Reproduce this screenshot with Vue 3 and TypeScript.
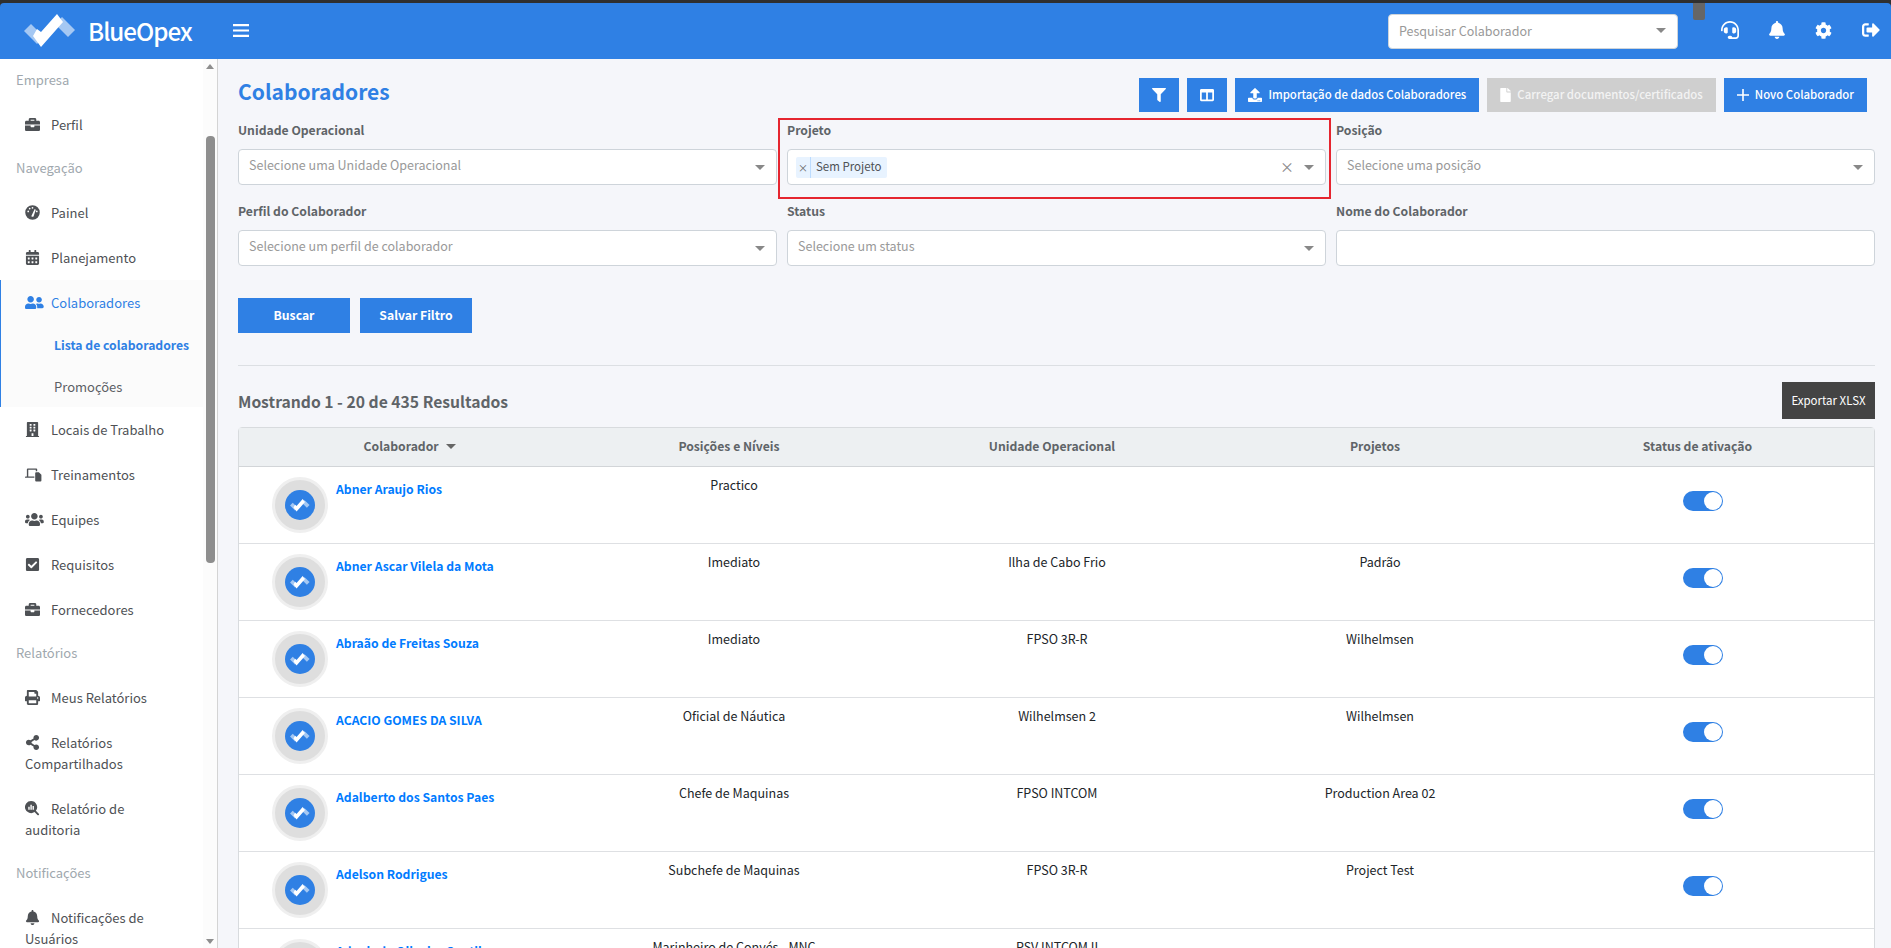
<template>
  <div class="page">
    <header class="topbar">
      <div class="brand">
        <svg class="logo" viewBox="0 0 52 34" width="52" height="34">
          <polygon points="0,17 7,10 20,23 13,30" fill="#a5c8f3" />
          <polygon points="38,3 51,16 44,23 31,10" fill="#a5c8f3" />
          <polygon points="9,22 17,33 39,8 33,0 17,18 13,15" fill="#fff" />
        </svg>
        <span class="brand-name">BlueOpex</span>
      </div>
      <svg class="burger" viewBox="0 0 16 13" width="16" height="13">
        <path d="M0 1.2h16M0 6.5h16M0 11.8h16" stroke="#fff" stroke-width="2.2" stroke-linecap="round" />
      </svg>
      <div class="top-right">
        <div class="top-search">
          <span>Pesquisar Colaborador</span>
          <i class="caret"></i>
        </div>
        <div class="top-icons">
          <svg viewBox="0 0 512 512" width="18" height="18" fill="#fff"><path :d="icons.headset" /></svg>
          <svg viewBox="0 0 448 512" width="16" height="18" fill="#fff"><path :d="icons.bell" /></svg>
          <svg viewBox="0 0 512 512" width="17" height="17" fill="#fff"><path :d="icons.cog" /></svg>
          <svg viewBox="0 0 512 512" width="18" height="18" fill="#fff"><path :d="icons.signout" /></svg>
        </div>
      </div>
      <div class="device-tab"></div>
    </header>

    <div class="body">
      <aside class="sidebar">
        <nav class="nav">
          <template v-for="entry in nav" :key="entry.label">
            <div v-if="entry.kind === 'group'" class="group">{{ entry.label }}</div>
            <div v-else-if="entry.kind === 'open'" class="open-block">
              <a class="item active">
                <svg :viewBox="entry.box" class="nav-icon wide-icon" fill="currentColor"><path :d="entry.icon" /></svg>{{ entry.label }}
              </a>
              <a class="sub current">Lista de colaboradores</a>
              <a class="sub">Promoções</a>
            </div>
            <a v-else class="item">
              <svg :viewBox="entry.box" class="nav-icon" :class="{ 'wide-icon': entry.box === '0 0 640 512' }" fill="currentColor"><path :d="entry.icon" fill-rule="evenodd" /></svg>{{ entry.label }}
            </a>
          </template>
        </nav>
        <div class="scroll-track">
          <i class="scroll-up"></i>
          <div class="scroll-thumb"></div>
          <i class="scroll-down"></i>
        </div>
      </aside>

      <main class="main">
        <div class="title-row">
          <h1>Colaboradores</h1>
          <div class="actions">
            <button class="btn icon-btn">
              <svg viewBox="0 0 512 512" width="14" height="14" fill="#fff"><path :d="icons.filter" /></svg>
            </button>
            <button class="btn icon-btn">
              <svg viewBox="0 0 512 512" width="14" height="14" fill="#fff"><path :d="icons.columns" /></svg>
            </button>
            <button class="btn">
              <svg viewBox="0 0 512 512" width="14" height="14" fill="#fff"><path :d="icons.upload" /></svg>
              Importação de dados Colaboradores
            </button>
            <button class="btn disabled">
              <svg viewBox="0 0 384 512" width="11" height="14" fill="#fff"><path :d="icons.file" /></svg>
              Carregar documentos/certificados
            </button>
            <button class="btn">
              <svg viewBox="0 0 12 12" width="12" height="12"><path d="M6 0v12M0 6h12" stroke="#fff" stroke-width="1.6" /></svg>
              Novo Colaborador
            </button>
          </div>
        </div>

        <div class="filters">
          <div class="field">
            <label>Unidade Operacional</label>
            <div class="select"><span>Selecione uma Unidade Operacional</span><i class="caret"></i></div>
          </div>
          <div class="field highlighted">
            <label>Projeto</label>
            <div class="select">
              <span class="chip"><b>×</b><em>Sem Projeto</em></span>
              <span class="clear">×</span>
              <i class="caret"></i>
            </div>
          </div>
          <div class="field">
            <label>Posição</label>
            <div class="select"><span>Selecione uma posição</span><i class="caret"></i></div>
          </div>
          <div class="field">
            <label>Perfil do Colaborador</label>
            <div class="select"><span>Selecione um perfil de colaborador</span><i class="caret"></i></div>
          </div>
          <div class="field">
            <label>Status</label>
            <div class="select"><span>Selecione um status</span><i class="caret"></i></div>
          </div>
          <div class="field">
            <label>Nome do Colaborador</label>
            <div class="select"></div>
          </div>
        </div>

        <div class="search-row">
          <button class="btn wide">Buscar</button>
          <button class="btn wide">Salvar Filtro</button>
        </div>

        <hr />

        <div class="result-row">
          <span class="result-count">Mostrando 1 - 20 de 435 Resultados</span>
          <button class="export">Exportar XLSX</button>
        </div>

        <div class="table">
          <div class="row head">
            <div>Colaborador <i class="caret dark"></i></div>
            <div>Posições e Níveis</div>
            <div>Unidade Operacional</div>
            <div>Projetos</div>
            <div>Status de ativação</div>
          </div>
          <div v-for="person in people" :key="person.name" class="row">
            <div class="person">
              <div class="avatar">
                <div class="avatar-in">
                  <svg viewBox="0 0 52 34" width="20" height="13">
                    <polygon points="0,17 7,10 20,23 13,30" fill="#a5c8f3" />
                    <polygon points="38,3 51,16 44,23 31,10" fill="#a5c8f3" />
                    <polygon points="9,22 17,33 39,8 33,0 17,18 13,15" fill="#fff" />
                  </svg>
                </div>
              </div>
              <a class="name">{{ person.name }}</a>
            </div>
            <div class="cell">{{ person.role }}</div>
            <div class="cell">{{ person.unit }}</div>
            <div class="cell">{{ person.project }}</div>
            <div class="cell toggle-cell"><span class="toggle"></span></div>
          </div>
        </div>
      </main>
    </div>
  </div>
</template>

<script setup lang="ts">
const icons = {
  headset: 'M192 208c0-17.67-14.33-32-32-32h-16c-35.35 0-64 28.65-64 64v48c0 35.35 28.65 64 64 64h16c17.67 0 32-14.33 32-32V208zm176 144c35.35 0 64-28.65 64-64v-48c0-35.35-28.65-64-64-64h-16c-17.67 0-32 14.33-32 32v112c0 17.67 14.33 32 32 32h16zM256 0C113.18 0 4.58 118.83 0 256v16c0 8.84 7.16 16 16 16h16c8.84 0 16-7.16 16-16v-16c0-114.69 93.31-208 208-208s208 93.31 208 208h-.12c.08 2.43.12 165.72.12 165.72 0 23.35-18.93 42.28-42.28 42.28H320c0-26.51-21.49-48-48-48h-32c-26.51 0-48 21.49-48 48s21.49 48 48 48h181.72c49.86 0 90.28-40.42 90.28-90.28V256C507.42 118.83 398.82 0 256 0z',
  bell: 'M224 512c35.32 0 63.97-28.65 63.97-64H160.03c0 35.35 28.65 64 63.97 64zm215.39-149.71c-19.32-20.76-55.47-51.99-55.47-154.29 0-77.7-54.48-139.9-127.94-155.16V32c0-17.67-14.32-32-31.98-32s-31.98 14.33-31.98 32v20.84C118.56 68.1 64.08 130.3 64.08 208c0 102.3-36.15 133.53-55.47 154.29-6 6.45-8.66 14.16-8.61 21.71.11 16.4 12.98 32 32.1 32h383.8c19.12 0 32-15.6 32.1-32 .05-7.55-2.61-15.27-8.61-21.71z',
  cog: 'M487.4 315.7l-42.6-24.6c4.3-23.2 4.3-47 0-70.2l42.6-24.6c4.9-2.8 7.1-8.6 5.5-14-11.1-35.6-30-67.8-54.7-94.6-3.8-4.1-10-5.1-14.8-2.3L380.8 110c-17.9-15.4-38.5-27.3-60.8-35.1V25.8c0-5.6-3.9-10.5-9.4-11.7-36.7-8.2-74.3-7.8-109.2 0-5.5 1.2-9.4 6.1-9.4 11.7V75c-22.2 7.9-42.8 19.8-60.8 35.1L88.7 85.5c-4.9-2.8-11-1.9-14.8 2.3-24.7 26.7-43.6 58.9-54.7 94.6-1.7 5.4.6 11.2 5.5 14L67.3 221c-4.3 23.2-4.3 47 0 70.2l-42.6 24.6c-4.9 2.8-7.1 8.6-5.5 14 11.1 35.6 30 67.8 54.7 94.6 3.8 4.1 10 5.1 14.8 2.3l42.6-24.6c17.9 15.4 38.5 27.3 60.8 35.1v49.2c0 5.6 3.9 10.5 9.4 11.7 36.7 8.2 74.3 7.8 109.2 0 5.5-1.2 9.4-6.1 9.4-11.7v-49.2c22.2-7.9 42.8-19.8 60.8-35.1l42.6 24.6c4.9 2.8 11 1.9 14.8-2.3 24.7-26.7 43.6-58.9 54.7-94.6 1.5-5.5-.7-11.3-5.6-14.1zM256 336c-44.1 0-80-35.9-80-80s35.9-80 80-80 80 35.9 80 80-35.9 80-80 80z',
  signout: 'M497 273L329 441c-15 15-41 4.5-41-17v-96H152c-13.3 0-24-10.7-24-24v-96c0-13.3 10.7-24 24-24h136V88c0-21.4 25.9-32 41-17l168 168c9.3 9.4 9.3 24.6 0 34zM192 436v-40c0-6.6-5.4-12-12-12H96c-17.7 0-32-14.3-32-32V160c0-17.7 14.3-32 32-32h84c6.6 0 12-5.4 12-12V76c0-6.6-5.4-12-12-12H96c-53 0-96 43-96 96v192c0 53 43 96 96 96h84c6.6 0 12-5.4 12-12z',
  filter: 'M487.976 0H24.028C2.71 0-8.047 25.866 7.058 40.971L192 225.941V432c0 7.831 3.821 15.17 10.237 19.662l80 55.98C298.02 518.69 320 507.493 320 487.98V225.941l184.947-184.97C520.021 25.896 509.338 0 487.976 0z',
  columns: 'M464 32H48C21.49 32 0 53.49 0 80v352c0 26.51 21.49 48 48 48h416c26.51 0 48-21.49 48-48V80c0-26.51-21.49-48-48-48zM224 416H64V160h160v256zm224 0H288V160h160v256z',
  upload: 'M296 384h-80c-13.3 0-24-10.7-24-24V192h-87.7c-17.8 0-26.7-21.5-14.1-34.1L242.3 5.7c7.5-7.5 19.8-7.5 27.3 0l152.2 152.2c12.6 12.6 3.7 34.1-14.1 34.1H320v168c0 13.3-10.7 24-24 24zm216-8v112c0 13.3-10.7 24-24 24H24c-13.3 0-24-10.7-24-24V376c0-13.3 10.7-24 24-24h136v8c0 30.9 25.1 56 56 56h80c30.9 0 56-25.1 56-56v-8h136c13.3 0 24 10.7 24 24zm-124 88c0-11-9-20-20-20s-20 9-20 20 9 20 20 20 20-9 20-20zm64 0c0-11-9-20-20-20s-20 9-20 20 9 20 20 20 20-9 20-20z',
  file: 'M224 136V0H24C10.7 0 0 10.7 0 24v464c0 13.3 10.7 24 24 24h336c13.3 0 24-10.7 24-24V160H248c-13.2 0-24-10.8-24-24zm160-14.1v6.1H256V0h6.1c6.4 0 12.5 2.5 17 7l97.9 98c4.5 4.5 7 10.6 7 16.9z',
  briefcase: 'M320 336c0 8.84-7.16 16-16 16h-96c-8.84 0-16-7.16-16-16v-48H0v144c0 25.6 22.4 48 48 48h416c25.6 0 48-22.4 48-48V288H320v48zm144-208h-80V80c0-25.6-22.4-48-48-48H176c-25.6 0-48 22.4-48 48v48H48c-25.6 0-48 22.4-48 48v80h512v-80c0-25.6-22.4-48-48-48zm-144 0H192V96h128v32z',
  gauge: 'M256 8a248 248 0 1 0 0 496 248 248 0 0 0 0-496zM256 64a30 30 0 1 1 0 60 30 30 0 0 1 0-60zM110 250a30 30 0 1 1 0-60 30 30 0 0 1 0 60zM160 150a30 30 0 1 1 0-60 30 30 0 0 1 0 60zM402 250a30 30 0 1 1 0-60 30 30 0 0 1 0 60zM218 372L330 140l38 18-72 214a40 40 0 0 1-78 0z',
  calendar: 'M0 464c0 26.5 21.5 48 48 48h352c26.5 0 48-21.5 48-48V192H0v272zm320-196c0-6.6 5.4-12 12-12h40c6.6 0 12 5.4 12 12v40c0 6.6-5.4 12-12 12h-40c-6.6 0-12-5.4-12-12v-40zm0 128c0-6.6 5.4-12 12-12h40c6.6 0 12 5.4 12 12v40c0 6.6-5.4 12-12 12h-40c-6.6 0-12-5.4-12-12v-40zM192 268c0-6.6 5.4-12 12-12h40c6.6 0 12 5.4 12 12v40c0 6.6-5.4 12-12 12h-40c-6.6 0-12-5.4-12-12v-40zm0 128c0-6.6 5.4-12 12-12h40c6.6 0 12 5.4 12 12v40c0 6.6-5.4 12-12 12h-40c-6.6 0-12-5.4-12-12v-40zM64 268c0-6.6 5.4-12 12-12h40c6.6 0 12 5.4 12 12v40c0 6.6-5.4 12-12 12H76c-6.6 0-12-5.4-12-12v-40zm0 128c0-6.6 5.4-12 12-12h40c6.6 0 12 5.4 12 12v40c0 6.6-5.4 12-12 12H76c-6.6 0-12-5.4-12-12v-40zM400 64h-48V16c0-8.8-7.2-16-16-16h-32c-8.8 0-16 7.2-16 16v48H160V16c0-8.8-7.2-16-16-16h-32c-8.8 0-16 7.2-16 16v48H48C21.5 64 0 85.5 0 112v48h448v-48c0-26.5-21.5-48-48-48z',
  friends: 'M192 256c61.9 0 112-50.1 112-112S253.9 32 192 32 80 82.1 80 144s50.1 112 112 112zm76.8 32h-8.3c-20.8 10-43.9 16-68.5 16s-47.6-6-68.5-16h-8.3C51.6 288 0 339.6 0 403.2V432c0 26.5 21.5 48 48 48h288c26.5 0 48-21.5 48-48v-28.8c0-63.6-51.6-115.2-115.2-115.2zM480 256c53 0 96-43 96-96s-43-96-96-96-96 43-96 96 43 96 96 96zm48 32h-3.8c-13.9 4.8-28.6 8-44.2 8s-30.3-3.2-44.2-8H432c-20.4 0-39.2 5.9-55.7 15.4 24.4 26.3 39.7 61.2 39.7 99.8v38.4c0 2.2-.5 4.3-.6 6.4H592c26.5 0 48-21.5 48-48 0-61.9-50.1-112-112-112z',
  building: 'M436 480h-20V24c0-13.3-10.7-24-24-24H56C42.7 0 32 10.7 32 24v456H12c-6.6 0-12 5.4-12 12v20h448v-20c0-6.6-5.4-12-12-12zM128 76c0-6.6 5.4-12 12-12h40c6.6 0 12 5.4 12 12v40c0 6.6-5.4 12-12 12h-40c-6.6 0-12-5.4-12-12V76zm0 96c0-6.6 5.4-12 12-12h40c6.6 0 12 5.4 12 12v40c0 6.6-5.4 12-12 12h-40c-6.6 0-12-5.4-12-12v-40zm52 148h-40c-6.6 0-12-5.4-12-12v-40c0-6.6 5.4-12 12-12h40c6.6 0 12 5.4 12 12v40c0 6.6-5.4 12-12 12zm76 160h-64v-84c0-6.6 5.4-12 12-12h40c6.6 0 12 5.4 12 12v84zm64-172c0 6.6-5.4 12-12 12h-40c-6.6 0-12-5.4-12-12v-40c0-6.6 5.4-12 12-12h40c6.6 0 12 5.4 12 12v40zm0-96c0 6.6-5.4 12-12 12h-40c-6.6 0-12-5.4-12-12v-40c0-6.6 5.4-12 12-12h40c6.6 0 12 5.4 12 12v40zm0-96c0 6.6-5.4 12-12 12h-40c-6.6 0-12-5.4-12-12V76c0-6.6 5.4-12 12-12h40c6.6 0 12 5.4 12 12v40z',
  training: 'M64 48h320a32 32 0 0 1 32 32v64h-48V96H112v224h208v48H8a8 8 0 0 1-8-8v-8c0-18 14-32 32-32h32V80a32 32 0 0 1 32-32zM380 176h92l88 88v200a32 32 0 0 1-32 32H380a32 32 0 0 1-32-32V208a32 32 0 0 1 32-32z',
  users: 'M96 224c35.3 0 64-28.7 64-64s-28.7-64-64-64-64 28.7-64 64 28.7 64 64 64zm448 0c35.3 0 64-28.7 64-64s-28.7-64-64-64-64 28.7-64 64 28.7 64 64 64zm32 32h-64c-17.6 0-33.5 7.1-45.1 18.6 40.3 22.1 68.9 62 75.1 109.4h66c17.7 0 32-14.3 32-32v-32c0-35.3-28.7-64-64-64zm-256 0c61.9 0 112-50.1 112-112S381.9 32 320 32 208 82.1 208 144s50.1 112 112 112zm76.8 32h-8.3c-20.8 10-43.9 16-68.5 16s-47.6-6-68.5-16h-8.3C179.6 288 128 339.6 128 403.2V432c0 26.5 21.5 48 48 48h288c26.5 0 48-21.5 48-48v-28.8c0-63.6-51.6-115.2-115.2-115.2zm-223.7-13.4C161.5 263.1 145.6 256 128 256H64c-35.3 0-64 28.7-64 64v32c0 17.7 14.3 32 32 32h65.9c6.3-47.4 34.9-87.3 75.2-109.4z',
  check: 'M400 480H48c-26.51 0-48-21.49-48-48V80c0-26.51 21.49-48 48-48h352c26.51 0 48 21.49 48 48v352c0 26.51-21.49 48-48 48zm-204.686-98.059l184-184c6.248-6.248 6.248-16.379 0-22.627l-22.627-22.627c-6.248-6.248-16.379-6.249-22.628 0L184 302.745l-70.059-70.059c-6.248-6.248-16.379-6.248-22.628 0l-22.627 22.627c-6.248 6.248-6.248 16.379 0 22.627l104 104c6.249 6.25 16.379 6.25 22.628.001z',
  print: 'M448 192V77.25c0-8.49-3.37-16.62-9.37-22.63L393.37 9.37c-6-6-14.14-9.37-22.63-9.37H96C78.33 0 64 14.33 64 32v160c-35.35 0-64 28.65-64 64v112c0 8.84 7.16 16 16 16h48v96c0 17.67 14.33 32 32 32h320c17.67 0 32-14.33 32-32v-96h48c8.84 0 16-7.16 16-16V256c0-35.35-28.65-64-64-64zm-64 256H128v-96h256v96zm0-224H128V64h192v48c0 8.84 7.16 16 16 16h48v96zm48 72c-13.25 0-24-10.75-24-24 0-13.26 10.75-24 24-24s24 10.74 24 24c0 13.25-10.75 24-24 24z',
  share: 'M352 320c-22.608 0-43.387 7.819-59.79 20.895l-102.486-64.054a96.551 96.551 0 0 0 0-41.683l102.486-64.054C308.613 184.181 329.392 192 352 192c53.019 0 96-42.981 96-96S405.019 0 352 0s-96 42.981-96 96c0 7.158.79 14.13 2.276 20.841L155.79 180.895C139.387 167.819 118.608 160 96 160c-53.019 0-96 42.981-96 96s42.981 96 96 96c22.608 0 43.387-7.819 59.79-20.895l102.486 64.054A96.301 96.301 0 0 0 256 416c0 53.019 42.981 96 96 96s96-42.981 96-96-42.981-96-96-96z',
  audit: 'M208 0a208 208 0 1 0 118 379l98 98a32 32 0 0 0 46-46l-98-98A208 208 0 0 0 208 0zM112 200h48v96h-48zm72-72h48v168h-48zm72 40h48v128h-48z',
}

type NavEntry = { kind: 'group' | 'item' | 'open'; label: string; icon?: string; box?: string }

const nav: NavEntry[] = [
  { kind: 'group', label: 'Empresa' },
  { kind: 'item', label: 'Perfil', icon: icons.briefcase, box: '0 0 512 512' },
  { kind: 'group', label: 'Navegação' },
  { kind: 'item', label: 'Painel', icon: icons.gauge, box: '0 0 512 512' },
  { kind: 'item', label: 'Planejamento', icon: icons.calendar, box: '0 0 448 512' },
  { kind: 'open', label: 'Colaboradores', icon: icons.friends, box: '0 0 640 512' },
  { kind: 'item', label: 'Locais de Trabalho', icon: icons.building, box: '0 0 448 512' },
  { kind: 'item', label: 'Treinamentos', icon: icons.training, box: '0 0 640 512' },
  { kind: 'item', label: 'Equipes', icon: icons.users, box: '0 0 640 512' },
  { kind: 'item', label: 'Requisitos', icon: icons.check, box: '0 0 448 512' },
  { kind: 'item', label: 'Fornecedores', icon: icons.briefcase, box: '0 0 512 512' },
  { kind: 'group', label: 'Relatórios' },
  { kind: 'item', label: 'Meus Relatórios', icon: icons.print, box: '0 0 512 512' },
  { kind: 'item', label: 'Relatórios Compartilhados', icon: icons.share, box: '0 0 448 512' },
  { kind: 'item', label: 'Relatório de auditoria', icon: icons.audit, box: '0 0 512 512' },
  { kind: 'group', label: 'Notificações' },
  { kind: 'item', label: 'Notificações de Usuários', icon: icons.bell, box: '0 0 448 512' },
]

const people = [
  { name: 'Abner Araujo Rios', role: 'Practico', unit: '', project: '' },
  { name: 'Abner Ascar Vilela da Mota', role: 'Imediato', unit: 'Ilha de Cabo Frio', project: 'Padrão' },
  { name: 'Abraão de Freitas Souza', role: 'Imediato', unit: 'FPSO 3R-R', project: 'Wilhelmsen' },
  { name: 'ACACIO GOMES DA SILVA', role: 'Oficial de Náutica', unit: 'Wilhelmsen 2', project: 'Wilhelmsen' },
  { name: 'Adalberto dos Santos Paes', role: 'Chefe de Maquinas', unit: 'FPSO INTCOM', project: 'Production Area 02' },
  { name: 'Adelson Rodrigues', role: 'Subchefe de Maquinas', unit: 'FPSO 3R-R', project: 'Project Test' },
  { name: 'Adenir de Oliveira Gentil', role: 'Marinheiro de Convés - MNC', unit: 'PSV INTCOM II', project: '' },
]
</script>

<style>
html,
body {
  margin: 0;
  height: 100%;
  overflow: hidden;
  background: #f5f6fa;
}
</style>

<style scoped>
.page {
  height: 948px;
  overflow: hidden;
  display: flex;
  flex-direction: column;
  font-family: "Noto Sans CJK SC", "Noto Sans", sans-serif;
  font-size: 12.5px;
  color: #4e5155;
  background: #2f2f2f;
  position: relative;
}

.topbar {
  margin-top: 3px;
  height: 56px;
  flex: none;
  background: #2f80e4;
  display: flex;
  align-items: center;
  border-radius: 4px 4px 0 0;
}

.brand {
  width: 233px;
  flex: none;
  display: flex;
  align-items: center;
  padding-left: 24px;
  box-sizing: border-box;
}

.logo {
  flex: none;
}

.brand-name {
  margin-left: 12px;
  color: #fff;
  font-size: 24.2px;
  line-height: 30px;
  font-weight: 500;
  letter-spacing: -1px;
}

.burger {
  flex: none;
  margin-top: -2px;
}

.top-right {
  margin-left: auto;
  display: flex;
  align-items: center;
}

.top-search {
  width: 290px;
  height: 35px;
  background: #fff;
  border: 1px solid #ced4da;
  border-radius: 4px;
  box-sizing: border-box;
  display: flex;
  align-items: center;
  justify-content: space-between;
  padding: 0 11px 2px 10px;
  color: #999;
  font-size: 12.5px;
}

.top-icons {
  width: 213px;
  padding: 0 11px 2px 43px;
  box-sizing: border-box;
  display: flex;
  justify-content: space-between;
  align-items: center;
}

.device-tab {
  position: absolute;
  left: 1693px;
  top: 3px;
  width: 12px;
  height: 17px;
  background: #666;
  border-radius: 0 0 2px 2px;
}

.caret {
  display: inline-block;
  width: 0;
  height: 0;
  border-left: 5px solid transparent;
  border-right: 5px solid transparent;
  border-top: 5px solid #888;
}

.caret.dark {
  border-top-color: #666;
  margin-left: 5px;
  vertical-align: 2px;
}

.body {
  flex: 1;
  display: flex;
  min-height: 0;
  background: #f5f6fa;
}

.sidebar {
  width: 218px;
  flex: none;
  display: flex;
  background: #fff;
  border-right: 1px solid #d4d4d4;
  box-sizing: border-box;
  overflow: hidden;
}

.nav {
  width: 203px;
  flex: none;
  font-size: 13px;
}

.group {
  height: 43px;
  line-height: 42px;
  padding-left: 16px;
  color: #a0a8ae;
  font-size: 13px;
}

.item {
  display: block;
  padding: 11.5px 32px 12.5px 25px;
  line-height: 21px;
  color: #4e5155;
}

.nav-icon {
  width: 15px;
  height: 15px;
  margin-right: 11px;
  vertical-align: -2px;
}

.nav-icon.wide-icon {
  width: 18.75px;
  margin-right: 7.25px;
}

.open-block {
  background: #fbfbfb;
  border-left: 1px solid #2f80e4;
  padding-bottom: 0;
}

.open-block .item {
  padding-left: 24px;
}

.item.active,
.sub.current {
  color: #2f80e4;
}

.sub {
  display: block;
  height: 41px;
  line-height: 41px;
  padding-left: 53px;
  color: #5b6065;
  white-space: nowrap;
}

.sub.current {
  font-weight: 700;
  font-size: 12.2px;
}

.scroll-track {
  flex: 1;
  position: relative;
  background: #fcfcfc;
}

.scroll-thumb {
  position: absolute;
  left: 3px;
  top: 77px;
  width: 9px;
  height: 427px;
  background: #8e8e8e;
  border-radius: 4px;
}

.scroll-up,
.scroll-down {
  position: absolute;
  left: 3px;
  width: 0;
  height: 0;
  border-left: 4px solid transparent;
  border-right: 4px solid transparent;
}

.scroll-up {
  top: 5px;
  border-bottom: 5px solid #8e8e8e;
}

.scroll-down {
  bottom: 4px;
  border-top: 5px solid #8e8e8e;
}

.main {
  flex: 1;
  padding: 19px 16px 0 20px;
  min-width: 0;
}

.title-row {
  display: flex;
  justify-content: space-between;
  align-items: flex-start;
  height: 42px;
}

h1 {
  margin: -2px 0 0;
  color: #2f80e4;
  font-size: 21px;
  line-height: 30px;
  font-weight: 700;
}

.actions {
  display: flex;
  gap: 8px;
  margin-right: 8px;
}

.btn {
  height: 34px;
  background: #2f80e4;
  border: 0;
  color: #fff;
  font: inherit;
  font-weight: 500;
  font-size: 11.4px;
  padding: 0 13px 2px;
  display: inline-flex;
  align-items: center;
  justify-content: center;
  gap: 6px;
  white-space: nowrap;
}

.btn svg {
  margin-top: 2px;
}

.icon-btn {
  width: 40px;
  padding: 0;
}

.icon-btn svg {
  margin-top: 0;
}

.btn.disabled {
  background: #cfcfcf;
  color: #f3f3f3;
}

.filters {
  display: grid;
  grid-template-columns: repeat(3, 1fr);
  gap: 16px 10px;
}

.field {
  position: relative;
}

.field label {
  display: block;
  height: 29px;
  line-height: 20px;
  font-size: 12.2px;
  font-weight: 700;
  color: #5f6468;
}

.select {
  height: 36px;
  background: #fff;
  border: 1px solid #ced4da;
  border-radius: 4px;
  box-sizing: border-box;
  padding: 0 11px 0 10px;
  display: flex;
  align-items: center;
  color: #999;
  font-size: 12.5px;
}

.select > span:not(.chip):not(.clear) {
  margin-top: -5px;
}

.select .caret {
  margin-left: auto;
}

.highlighted::after {
  content: '';
  position: absolute;
  left: -9px;
  right: -5px;
  top: -2px;
  bottom: -14px;
  border: 2px solid #e5252f;
  pointer-events: none;
}

.chip {
  height: 21px;
  margin-left: -2px;
  display: inline-flex;
  align-items: center;
  background: #e8f3ff;
  border-radius: 2px;
  color: #4e5155;
  font-size: 11.5px;
}

.chip b {
  font-weight: 400;
  width: 14px;
  font-size: 10px;
  color: #666;
  text-align: center;
  border-right: 1px solid #bcdcff;
  line-height: 21px;
}

.chip em {
  font-style: normal;
  padding: 0 5px 3px;
}

.clear {
  margin-left: auto;
  margin-right: -11px;
  font-size: 14px;
  color: #888;
  margin-top: -2px;
}

.clear + .caret {
  margin-left: 21px;
}

.search-row {
  display: flex;
  gap: 10px;
  margin-top: 32px;
}

.btn.wide {
  width: 112px;
  height: 35px;
  font-weight: 700;
  font-size: 12.2px;
}

hr {
  margin: 32px 0 0;
  border: 0;
  border-top: 1px solid #dcdfe3;
}

.result-row {
  display: flex;
  align-items: center;
  justify-content: space-between;
  height: 37px;
  margin-top: 16px;
}

.result-count {
  font-size: 15.7px;
  font-weight: 700;
  color: #5f6468;
  margin-top: 2px;
}

.export {
  background: #444;
  color: #fff;
  border: 0;
  height: 37px;
  width: 93px;
  font: inherit;
  font-size: 11.5px;
  padding: 0 0 2px;
}

.table {
  margin-top: 8px;
  background: #fff;
  border: 1px solid #d8dbde;
  border-radius: 4px 4px 0 0;
}

.row {
  display: grid;
  grid-template-columns: 342px 296px 350px 296px 1fr;
  height: 77px;
  box-sizing: border-box;
  border-bottom: 1px solid #dee0e3;
  text-align: center;
  color: #212529;
  padding-top: 8px;
  line-height: 20px;
}

.row.head {
  height: 39px;
  padding-top: 0;
  padding-right: 2px;
  line-height: 36px;
  background: #edf0f2;
  border-bottom-color: #d2d5d8;
  color: #5f6468;
  font-weight: 700;
  font-size: 12.2px;
}

.cell {
  padding-left: 10px;
}

.person {
  display: flex;
  align-items: flex-start;
  text-align: left;
  padding-left: 33px;
  margin-top: 2px;
}

.avatar {
  width: 56px;
  height: 56px;
  border-radius: 50%;
  background: #dedede;
  border: 3px solid #efefef;
  box-sizing: border-box;
  display: flex;
  align-items: center;
  justify-content: center;
  flex: none;
}

.avatar-in {
  width: 30px;
  height: 30px;
  border-radius: 50%;
  background: #2f80e4;
  display: flex;
  align-items: center;
  justify-content: center;
}

.name {
  margin-left: 8px;
  margin-top: 2px;
  color: #007bff;
  font-weight: 700;
  font-size: 12.2px;
}

.toggle-cell {
  padding: 16px 0 0 8px;
}

.toggle {
  display: inline-block;
  width: 40px;
  height: 20px;
  border-radius: 10px;
  background: #2f80e4;
  position: relative;
}

.toggle::after {
  content: '';
  position: absolute;
  right: 1px;
  top: 1px;
  width: 18px;
  height: 18px;
  border-radius: 50%;
  background: #fff;
}
</style>
